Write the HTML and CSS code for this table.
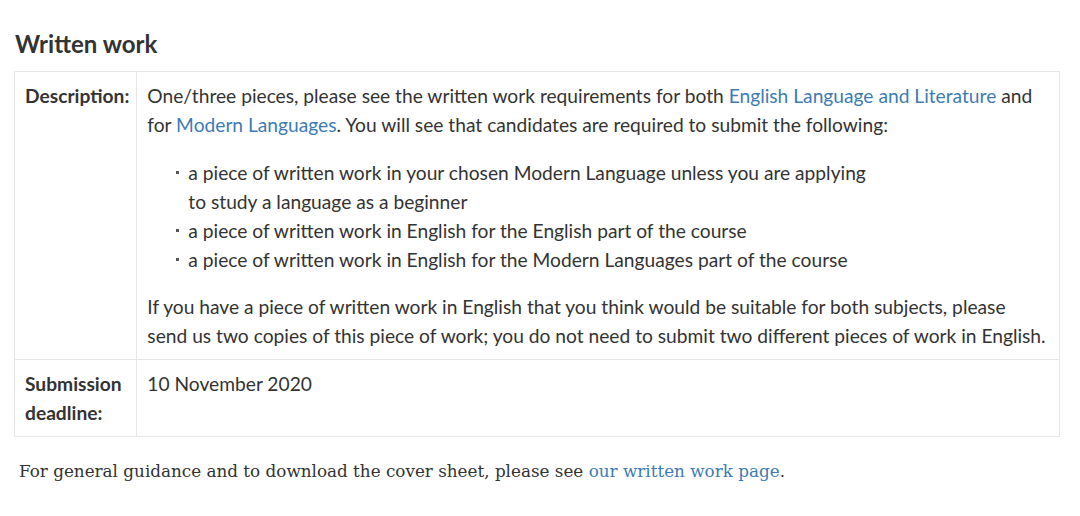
FILE: index.html
```html
<!DOCTYPE html>
<html>
<head>
<meta charset="utf-8">
<link rel="stylesheet" href="styles.css">
</head>
<body>
<div class="page">
  <h2 class="title">Written work</h2>
  <table class="info">
    <tr>
      <th class="label">Description:</th>
      <td class="value">
        <p class="para">One/three pieces, please see the written work requirements for both <a href="#">English Language and Literature</a> and for <a href="#">Modern Languages</a>. You will see that candidates are required to submit the following:</p>
        <ul class="list">
          <li>a piece of written work in your chosen Modern Language unless you are applying<br>to study a language as a beginner</li>
          <li>a piece of written work in English for the English part of the course</li>
          <li>a piece of written work in English for the Modern Languages part of the course</li>
        </ul>
        <p class="para last">If you have a piece of written work in English that you think would be suitable for both subjects, please send us two copies of this piece of work; you do not need to submit two different pieces of work in English.</p>
      </td>
    </tr>
    <tr>
      <th class="label">Submission deadline:</th>
      <td class="value">10 November 2020</td>
    </tr>
  </table>
  <p class="footer">For general guidance and to download the cover sheet, please see <a href="#">our written work page</a>.</p>
</div>
</body>
</html>
```
FILE: styles.css
```css
html, body {
  margin: 0;
  padding: 0;
  background: #ffffff;
}
.page {
  padding: 30px 20px 0 14px;
  font-family: "Lato", "Open Sans", sans-serif;
  color: #333333;
}
.title {
  margin: 0 0 13px 1px;
  font-size: 24px;
  font-weight: 700;
  line-height: 28px;
  color: #333333;
}
.info {
  width: 1046px;
  border-collapse: collapse;
  border: 1px solid #e6e6e6;
  font-size: 19.2px;
  line-height: 29px;
}
.info tr + tr {
  border-top: 1px solid #e6e6e6;
}
.label {
  width: 104px;
  padding: 9px 7px 9px 10px;
  text-align: left;
  vertical-align: top;
  font-weight: 700;
  border-right: 1px solid #e6e6e6;
}
.value {
  padding: 9px 10px 9px 10px;
  vertical-align: top;
}
.para {
  margin: 0;
}
.list {
  margin: 19px 0 18px 0;
  padding: 0 0 0 41px;
  list-style: none;
}
.list li {
  position: relative;
}
.list li::before {
  content: "";
  position: absolute;
  left: -12px;
  top: 13px;
  width: 3px;
  height: 3px;
  background: #555;
}
a {
  color: #3d7bb4;
  text-decoration: none;
}
.footer {
  margin: 20px 0 0 5px;
  font-family: "DejaVu Serif", serif;
  font-size: 16.8px;
  line-height: 28px;
}
```
